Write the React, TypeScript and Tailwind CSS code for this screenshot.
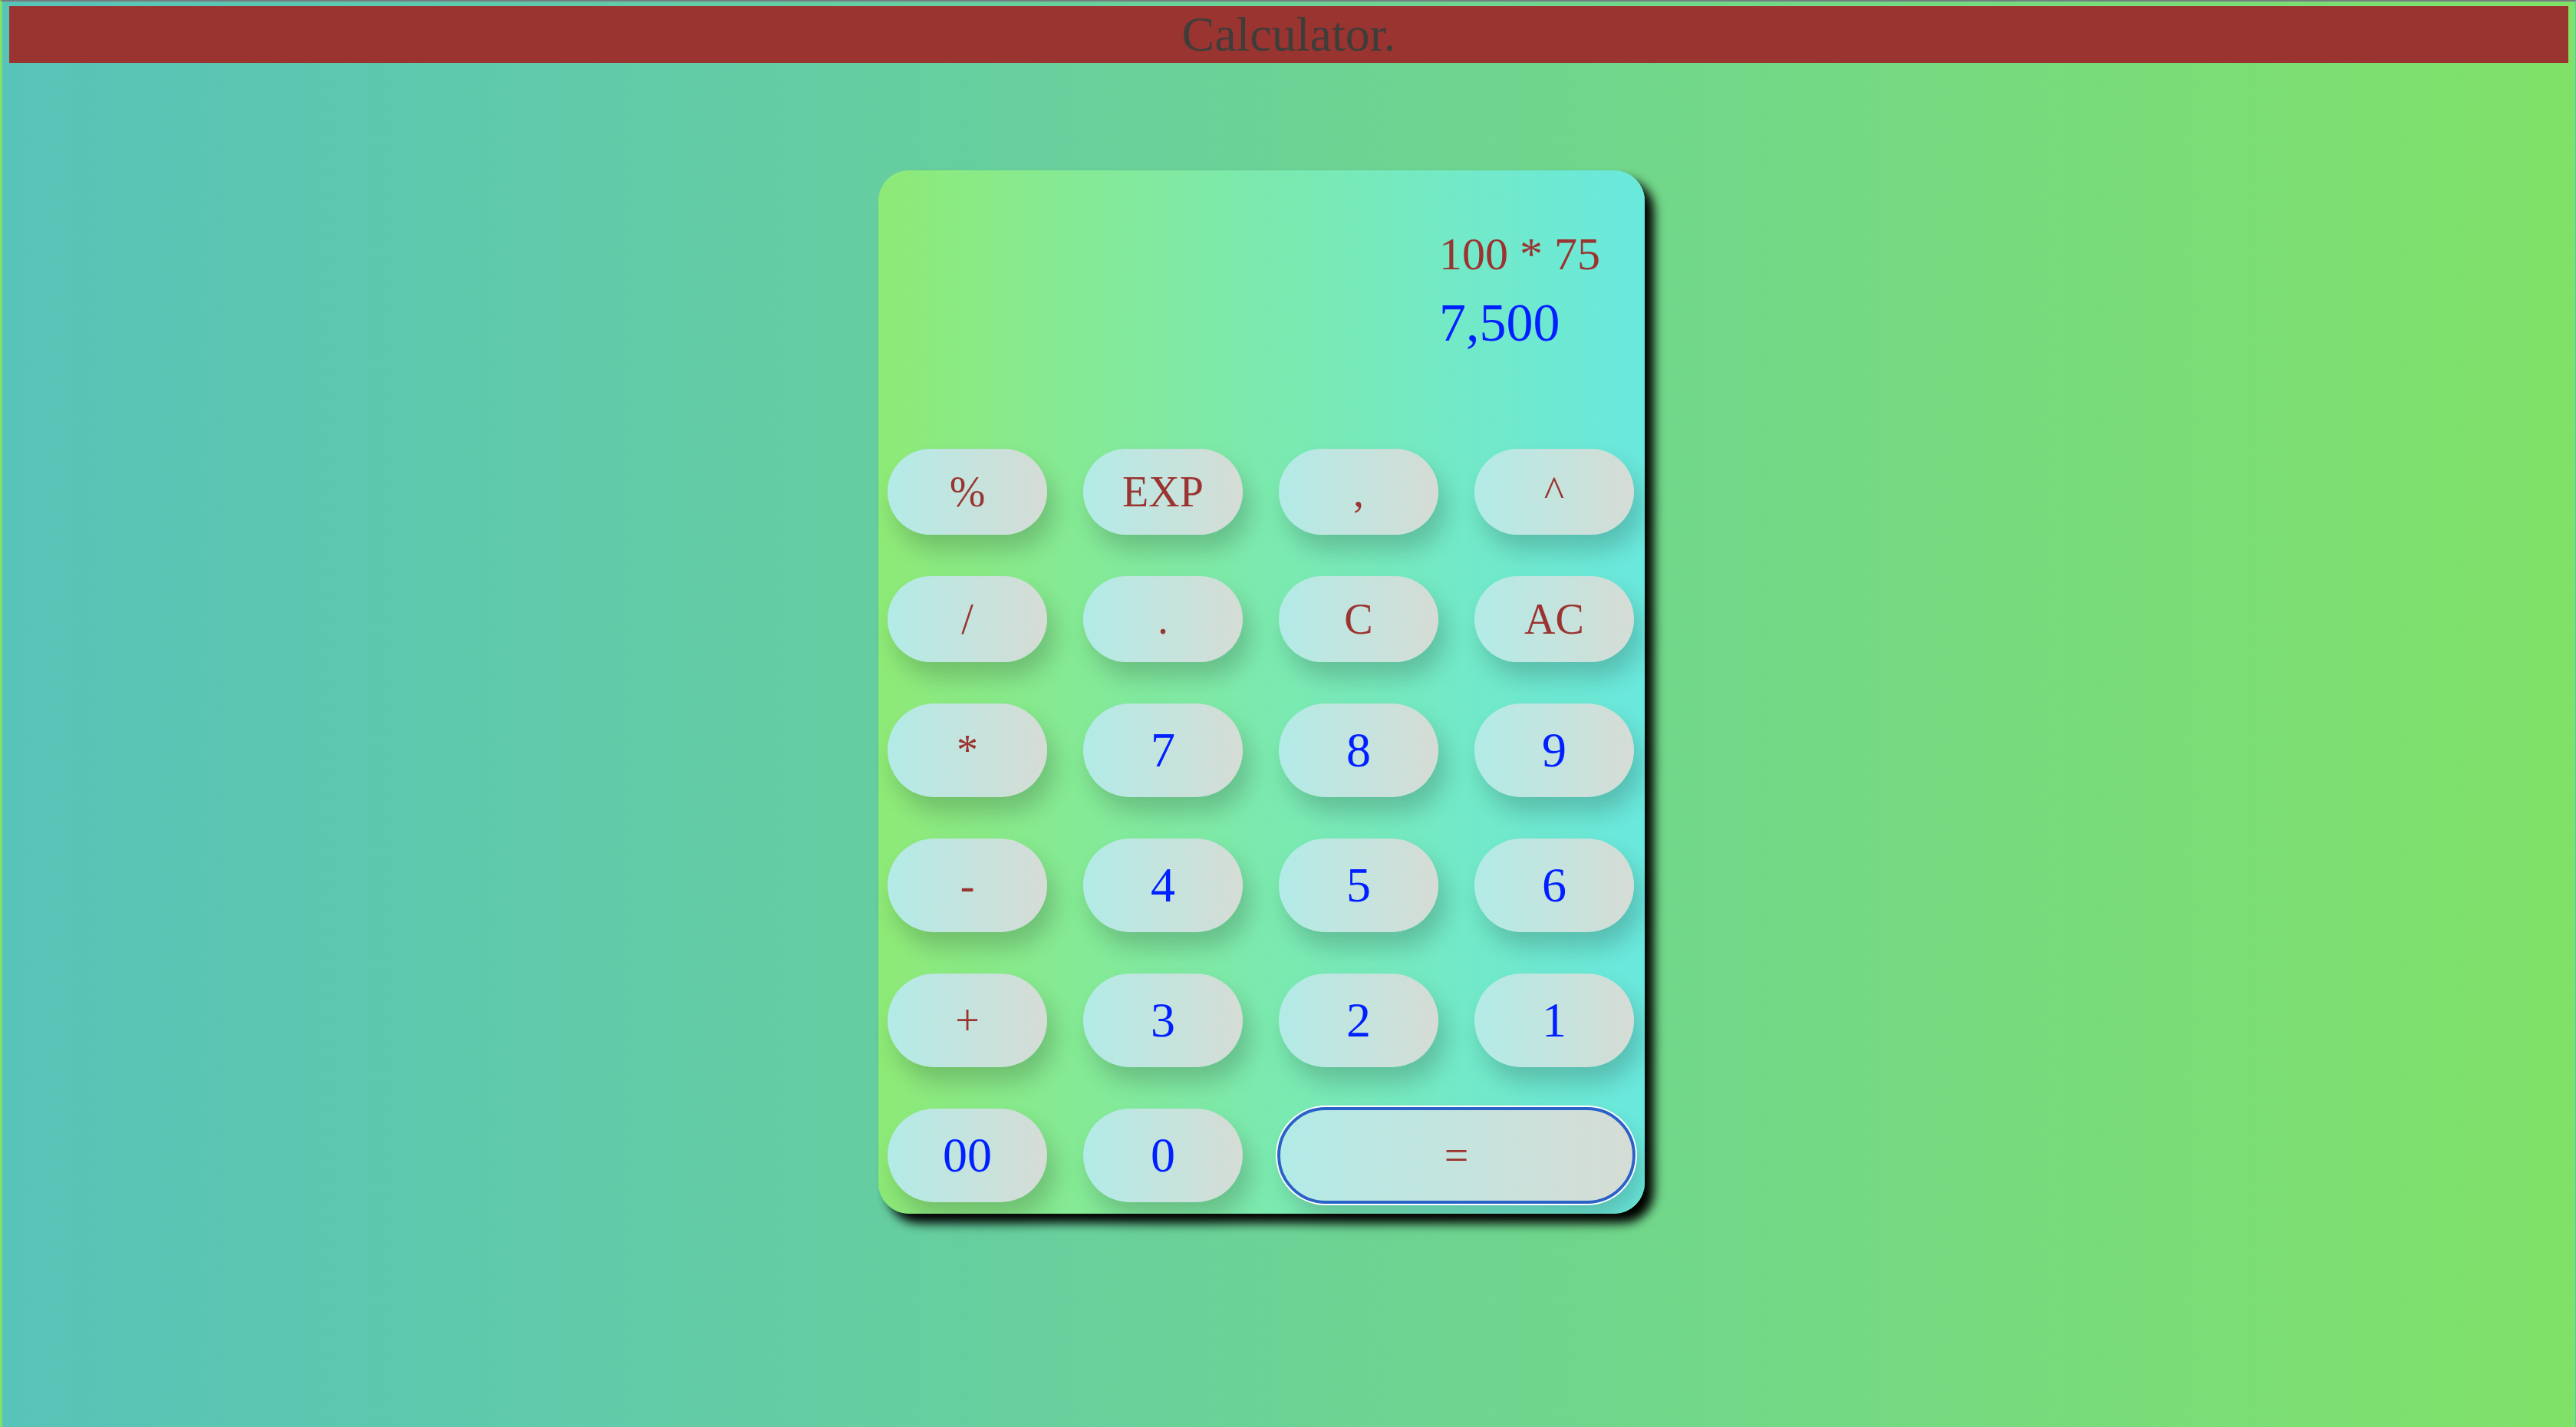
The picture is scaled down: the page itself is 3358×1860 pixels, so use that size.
import React from 'react';

type Key = {
  label: string;
  kind: 'op' | 'num';
  wide?: boolean;
};

const KEYS: Key[] = [
  { label: '%', kind: 'op' },
  { label: 'EXP', kind: 'op' },
  { label: ',', kind: 'op' },
  { label: '^', kind: 'op' },
  { label: '/', kind: 'op' },
  { label: '.', kind: 'op' },
  { label: 'C', kind: 'op' },
  { label: 'AC', kind: 'op' },
  { label: '*', kind: 'op' },
  { label: '7', kind: 'num' },
  { label: '8', kind: 'num' },
  { label: '9', kind: 'num' },
  { label: '-', kind: 'op' },
  { label: '4', kind: 'num' },
  { label: '5', kind: 'num' },
  { label: '6', kind: 'num' },
  { label: '+', kind: 'op' },
  { label: '3', kind: 'num' },
  { label: '2', kind: 'num' },
  { label: '1', kind: 'num' },
  { label: '00', kind: 'num' },
  { label: '0', kind: 'num' },
  { label: '=', kind: 'op', wide: true },
];

function CalcKey({ label, kind, wide }: Key) {
  const text =
    kind === 'num'
      ? 'text-[64px] leading-[74px] text-[#0020ff]'
      : 'text-[56px] leading-[64px] text-[#9b3430]';

  return (
    <button
      className={`${text} ${
        wide
          ? 'col-span-2 outline-[4px] outline-solid outline-[#2a62c8] outline-offset-[-2px] ring-[4px] ring-white'
          : ''
      } flex items-center justify-center rounded-full bg-linear-to-r from-[#b2ebe7] to-[#d5dcd5] py-[24px] shadow-[10px_20px_30px_rgba(0,0,0,0.18)]`}
    >
      {label}
    </button>
  );
}

export default function App() {
  return (
    <div className="min-h-screen border-t-2 border-t-[#737d80] border-l-[3px] border-l-[#80e268] border-r border-r-[#58c3b9] bg-linear-to-r from-[#58c3b8] to-[#80e167] px-[9px] pt-[6px] font-['Liberation_Serif','Times_New_Roman',serif]">
      <header className="flex h-[74px] items-center justify-center bg-[#9a3431] text-[64px] leading-[74px] text-[#3f3d3a]">
        Calculator.
      </header>

      <div className="mt-[140px] ml-[1133px] w-[999px] rounded-[40px] bg-linear-to-r from-[#8eea76] to-[#69e8dd] pl-[12px] pr-[14px] pb-[15px] shadow-[12px_12px_14px_#000]">
        <div className="h-[363px] pt-[74px] pl-[719px]">
          <div className="text-[60px] leading-[70px] text-[#9b3430]">100 * 75</div>
          <div className="mt-[15px] text-[70px] leading-[80px] text-[#0020ff]">7,500</div>
        </div>

        <div className="grid grid-cols-4 gap-x-[47px] gap-y-[54px]">
          {KEYS.map((k) => (
            <CalcKey key={k.label} {...k} />
          ))}
        </div>
      </div>
    </div>
  );
}
